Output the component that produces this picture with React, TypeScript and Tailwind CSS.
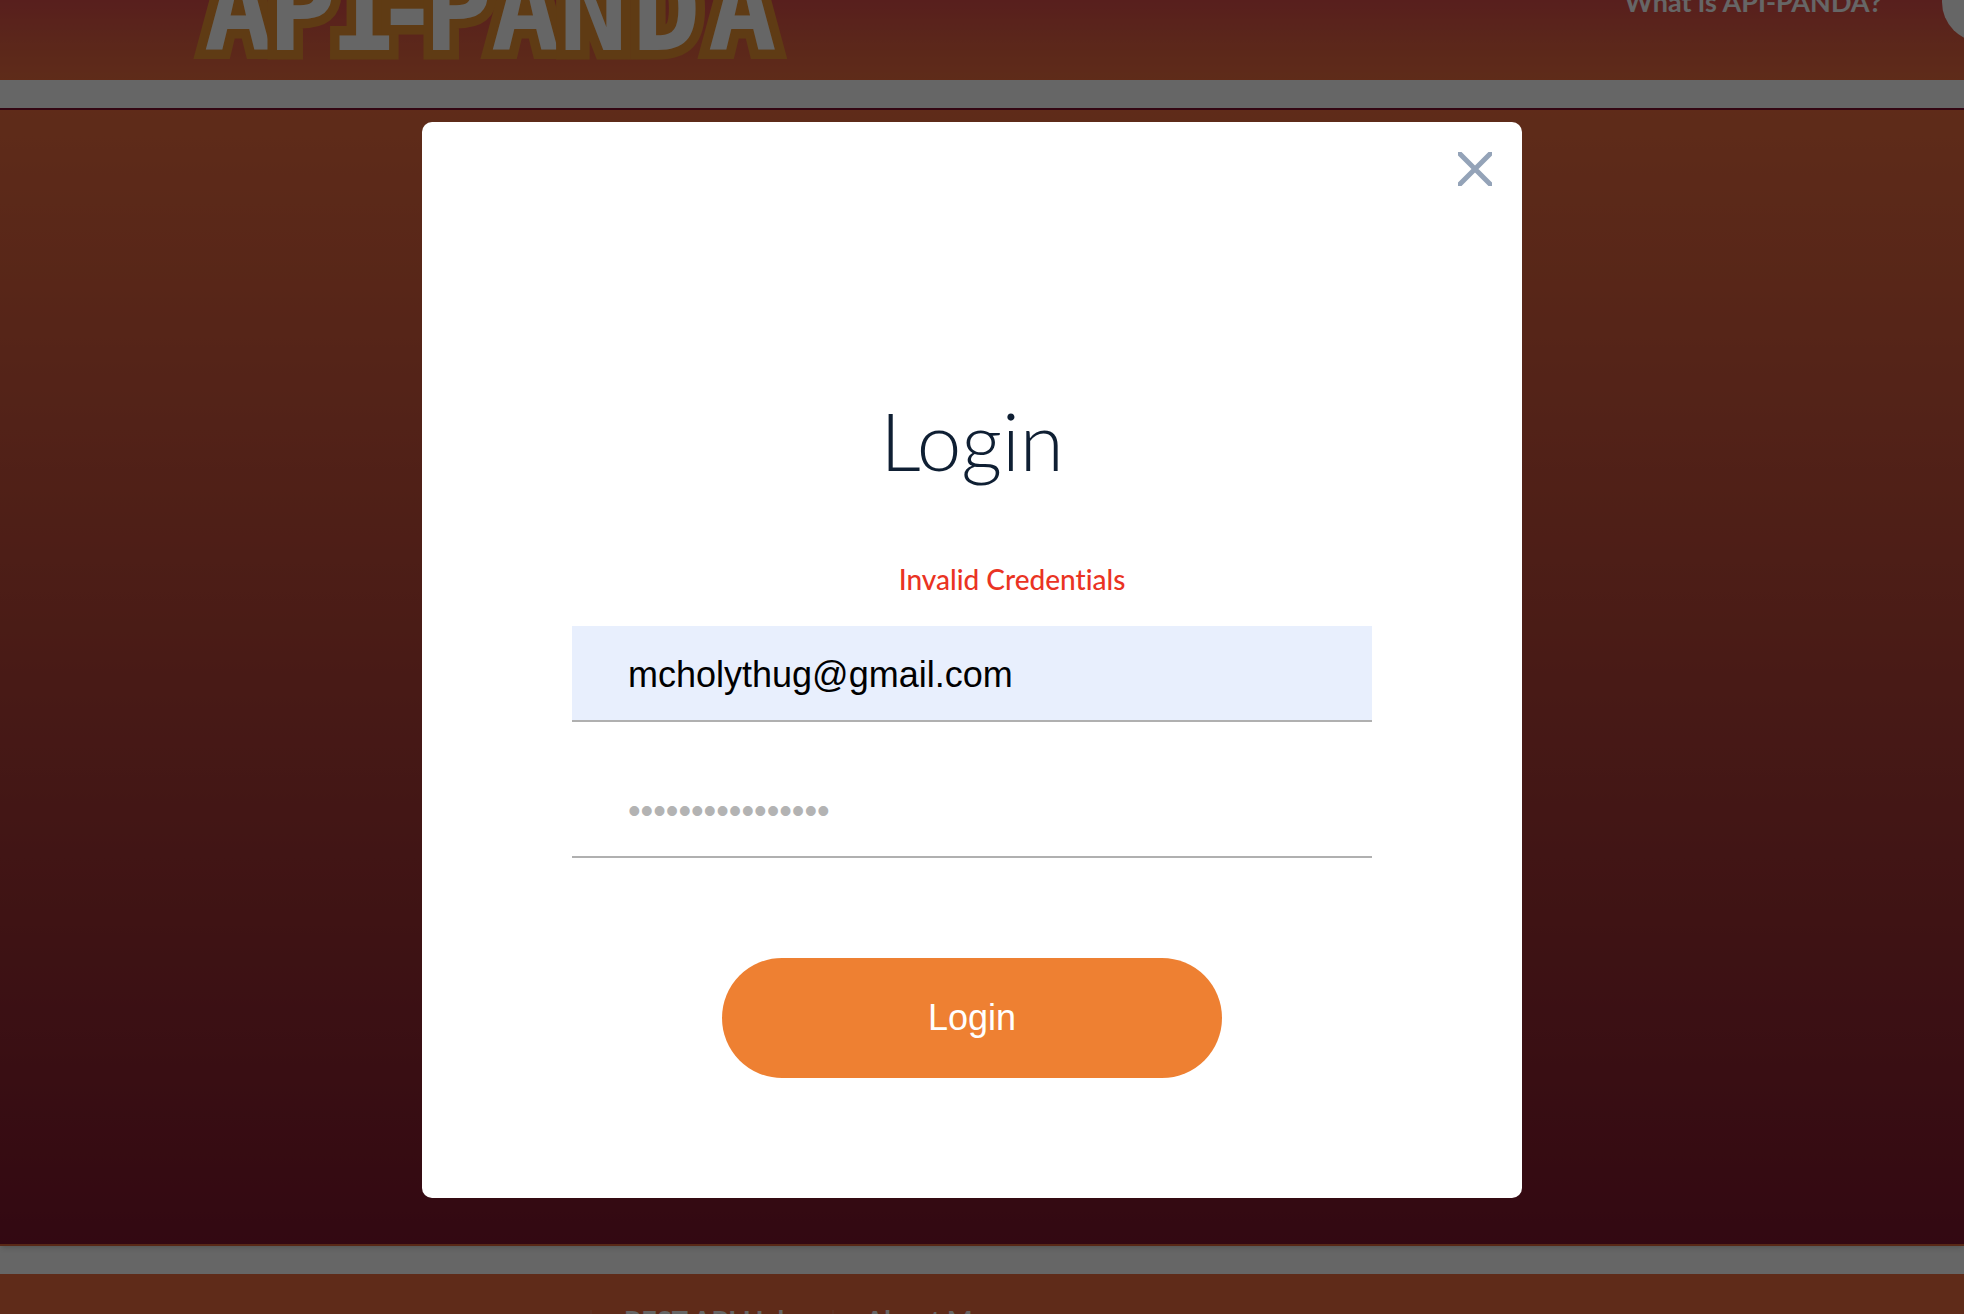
import React, { useState } from "react";

const footerLinks = ["REST API Help", "About Me"];

const Logo: React.FC = () => (
  <svg
    viewBox="0 0 600 100"
    className="h-[100px] w-[600px] shrink-0"
    role="img"
    aria-label="API-PANDA"
  >
    <text
      x="14 78 140 184 234 301 369 442 518"
      y="90"
      fontFamily="'DejaVu Sans Mono', monospace"
      fontWeight="700"
      fontSize="114"
      fill="#ffffff"
      stroke="#ee9432"
      strokeWidth="19"
      paintOrder="stroke"
    >
      API-PANDA
    </text>
  </svg>
);

const Header: React.FC = () => (
  <header className="flex h-20 shrink-0 items-end justify-between overflow-hidden bg-linear-to-b from-[#dc4e4a] via-[#e46044] to-[#ed6d40] pl-[190px]">
    <div className="pb-5">
      <Logo />
    </div>
    <nav className="flex items-center gap-[60px] pb-[38px] text-[27px] leading-8 font-bold text-white">
      <a href="#about" className="whitespace-nowrap">
        What is API-PANDA?
      </a>
      <button
        type="button"
        aria-label="Account"
        className="-mr-40 h-20 w-[182px] rounded-full bg-white"
      />
    </nav>
  </header>
);

const Footer: React.FC = () => (
  <footer className="h-10 shrink-0 overflow-hidden bg-[#ed6d40]">
    <nav className="flex pt-9 pl-[590px] text-[27px] leading-5 font-bold text-white">
      {footerLinks.map((link) => (
        <a
          key={link}
          href="#footer"
          className="border-l-2 border-white/10 px-8 whitespace-nowrap"
        >
          {link}
        </a>
      ))}
    </nav>
  </footer>
);

const LoginModal: React.FC = () => {
  const [email, setEmail] = useState("mcholythug@gmail.com");
  const [password, setPassword] = useState("");

  return (
    <div
      role="dialog"
      aria-modal="true"
      aria-labelledby="login-title"
      className="flex w-full max-w-[1100px] flex-col rounded-[10px] bg-white pb-[120px]"
    >
      <div className="flex justify-end p-[30px]">
        <button type="button" aria-label="Close">
          <svg viewBox="0 0 34 34" className="size-[34px]">
            <path
              d="M0 0L34 34M34 0L0 34"
              stroke="#94a3b8"
              strokeWidth="5"
              fill="none"
            />
          </svg>
        </button>
      </div>

      <form
        className="mx-auto flex w-full max-w-[800px] flex-col pt-[174px]"
        onSubmit={(e) => e.preventDefault()}
      >
        <h1
          id="login-title"
          className="text-center text-[80px] leading-[100px] font-light text-[#0f1f33]"
        >
          Login
        </h1>
        <p className="mt-[69px] pl-20 text-center text-[28px] leading-10 font-medium text-[#ea3323] [font-variant-ligatures:none]">
          Invalid Credentials
        </p>
        <input
          type="email"
          aria-label="Email"
          value={email}
          onChange={(e) => setEmail(e.target.value)}
          className="mt-[27px] h-24 w-full border-b-2 border-[#b0b0b0] bg-[#e8effd] px-14 pt-1 font-['Liberation_Sans',sans-serif] text-[36px] text-black outline-none"
        />
        <input
          type="password"
          aria-label="Password"
          placeholder="••••••••••••••••"
          value={password}
          onChange={(e) => setPassword(e.target.value)}
          className="mt-10 h-24 w-full border-b-2 border-[#b0b0b0] px-14 pt-1 font-['Liberation_Sans',sans-serif] text-[36px] text-black outline-none placeholder:text-[#b3b3b3]"
        />
        <button
          type="submit"
          className="mx-auto mt-[100px] h-[120px] w-[500px] rounded-full bg-[#ee8032] font-['Liberation_Sans',sans-serif] text-[36px] text-white"
        >
          Login
        </button>
      </form>
    </div>
  );
};

const App: React.FC = () => {
  return (
    <div className="relative flex h-screen flex-col overflow-hidden bg-white font-['Lato',sans-serif]">
      <Header />
      <main className="my-7 flex-1 border-t-2 border-b-2 border-t-[#80102f] border-b-[#df6438] bg-linear-to-b from-[#ed6d40] to-[#7f162d] shadow-md" />
      <Footer />

      {/* Dimmed backdrop */}
      <div className="absolute inset-0 flex items-center justify-center bg-black/60 pt-1.5 pr-5">
        <LoginModal />
      </div>
    </div>
  );
};

export default App;
